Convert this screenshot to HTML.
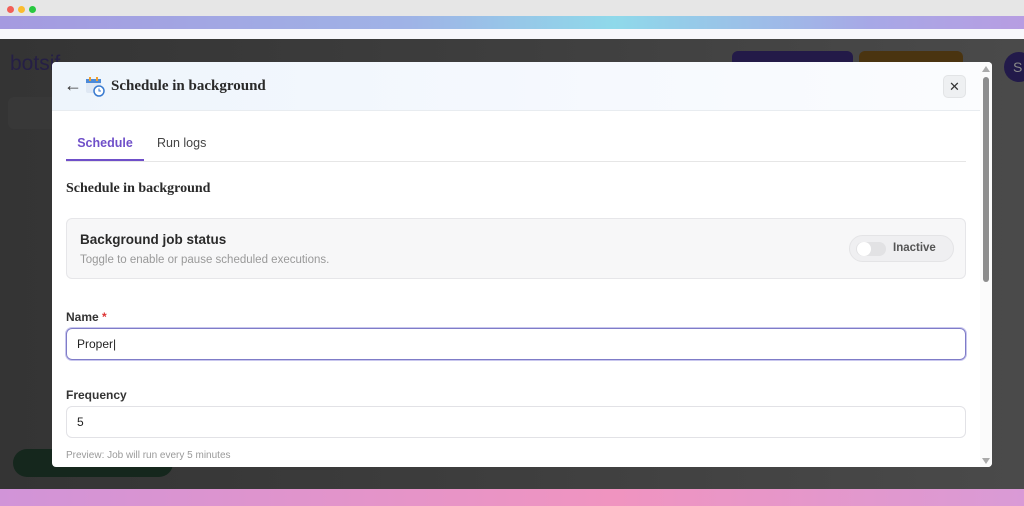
<!DOCTYPE html><html><head><style>
*{box-sizing:border-box;margin:0;padding:0}
body{width:1024px;height:506px;overflow:hidden;font-family:"Liberation Sans",sans-serif;background:#3c3c3c;position:relative}
.top{position:absolute;left:0;top:0;width:1024px;height:16px;background:#e6e6e6}
.dot{position:absolute;top:6px;width:7px;height:7px;border-radius:50%}
.grad{position:absolute;left:0;top:16px;width:1024px;height:13px;background:linear-gradient(90deg,#a59ae0,#9fb3e6 40%,#8fd9ea 60%,#a7a8e6 85%,#b79de2)}
.wstrip{position:absolute;left:0;top:29px;width:1024px;height:10px;background:#f7f7fb}
.bot{position:absolute;left:0;top:489px;width:1024px;height:17px;background:linear-gradient(90deg,#d194d8,#f094c0 60%,#d99ad6)}
.bg{position:absolute;left:0;top:39px;width:1024px;height:450px;background:linear-gradient(90deg,#343434,#3e3e3e 50%,#4a4a4a)}
.modal{position:absolute;left:52px;top:62px;width:940px;height:405px;background:#fff;border-radius:4px;overflow:hidden}
.hdr{height:49px;background:linear-gradient(90deg,#eef5fc,#f6f9fe 60%,#fbfcfe);border-bottom:1px solid #e8ecf0;position:relative}
.ttl{position:absolute;left:59px;top:15px;font-family:"Liberation Serif",serif;font-weight:bold;font-size:15px;color:#2a2a2a}
.x{position:absolute;left:891px;top:13px;width:23px;height:23px;border-radius:5px;background:#eef0f2;border:1px solid #e2e4e6;text-align:center;line-height:21px;font-size:13px;color:#333}
.sb{position:absolute;left:928px;top:0;width:12px;height:405px;background:#fbfbfb}
.thumb{position:absolute;left:931px;top:15px;width:6px;height:205px;background:#8d8d8d;border-radius:3px}
.tabs{position:absolute;left:14px;top:63px;width:900px;height:37px;border-bottom:1px solid #e6e6e6;font-size:12.5px}
.t1{position:absolute;left:0;top:11px;width:78px;text-align:center;color:#6f4fc9;font-weight:bold}
.ul{position:absolute;left:0;top:34px;width:78px;height:2px;background:#6f4fc9}
.t2{position:absolute;left:91px;top:11px;color:#444}
.h2{position:absolute;left:14px;top:118px;font-family:"Liberation Serif",serif;font-weight:bold;font-size:14px;color:#2a2a2a}
.card{position:absolute;left:14px;top:156px;width:900px;height:61px;border:1px solid #e6e6e9;border-radius:6px;background:#f7f7f8}
.ct{position:absolute;left:13px;top:13px;font-size:13.5px;font-weight:bold;color:#2a2a2a}
.cs{position:absolute;left:13px;top:35px;font-size:11.5px;color:#999}
.pill{position:absolute;left:782px;top:16px;width:105px;height:27px;border-radius:14px;background:#efeff1;border:1px solid #e4e4e6}
.sw{position:absolute;left:6px;top:6px;width:30px;height:14px;border-radius:7px;background:#e2e2e4}
.knob{position:absolute;left:7px;top:6px;width:14px;height:14px;border-radius:50%;background:#fff}
.pl{position:absolute;left:43px;top:6px;font-size:11.5px;font-weight:bold;color:#555}
.lbl{position:absolute;left:14px;font-size:12px;font-weight:bold;color:#333}
.inp{position:absolute;left:14px;width:900px;height:32px;border:1px solid #e2e2e6;border-radius:6px;font-size:12px;color:#222;padding:8px 10px}
.prev{position:absolute;left:14px;top:388px;font-size:10px;color:#999}
</style></head><body>
<div class="top"><div class="dot" style="left:7px;background:#f25f57"></div><div class="dot" style="left:18px;background:#fbbc2e"></div><div class="dot" style="left:29px;background:#28c840"></div></div>
<div class="grad"></div><div class="wstrip"></div>
<div class="bg">
<div style="position:absolute;left:10px;top:13px;font-size:21px;color:#251f45">botsif</div>
<div style="position:absolute;left:732px;top:12px;width:121px;height:30px;border-radius:6px;background:#231a48"></div>
<div style="position:absolute;left:859px;top:12px;width:104px;height:30px;border-radius:6px;background:#4a3410"></div>
<div style="position:absolute;left:1004px;top:13px;width:30px;height:30px;border-radius:50%;background:#221a4a;color:#888;font-size:14px;line-height:30px;padding-left:9px">S</div>
<div style="position:absolute;left:8px;top:58px;width:50px;height:32px;background:#383838;border-radius:6px"></div>
<div style="position:absolute;left:13px;top:410px;width:160px;height:28px;border-radius:14px;background:#15271d"></div>
</div>
<div class="bot"></div>
<div class="modal">
<div class="hdr">
<div style="position:absolute;left:12px;top:13px;font-size:18px;color:#333">&#8592;</div>
<svg style="position:absolute;left:33px;top:14px" width="20" height="21" viewBox="0 0 20 21"><rect x="1" y="3" width="15" height="14" rx="2" fill="#dfe8f4"/><rect x="1" y="3" width="15" height="4" fill="#4c8ad8"/><rect x="4" y="1" width="2" height="4" fill="#f0a030"/><rect x="11" y="1" width="2" height="4" fill="#f0a030"/><circle cx="14" cy="15" r="5" fill="#fff" stroke="#3a7bd0" stroke-width="1.5"/><path d="M14 12.5V15h2" stroke="#3a7bd0" fill="none"/></svg>
<div class="ttl" style="top:16px">Schedule in background</div>
<div class="x">&#10005;</div>
</div>
<div class="tabs"><div class="t1">Schedule</div><div class="ul"></div><div class="t2">Run logs</div></div>
<div class="h2" style="top:119px">Schedule in background</div>
<div class="card"><div class="ct">Background job status</div><div class="cs">Toggle to enable or pause scheduled executions.</div>
<div class="pill"><div class="sw"></div><div class="knob"></div><div class="pl">Inactive</div></div></div>
<div class="lbl" style="top:248px">Name <span style="color:#d33">*</span></div>
<div class="inp" style="top:266px;border-color:#7f7cc8;box-shadow:0 0 0 1px #c9c7ee">Proper|</div>
<div class="lbl" style="top:326px">Frequency</div>
<div class="inp" style="top:344px">5</div>
<div class="prev">Preview: Job will run every 5 minutes</div>
<div class="sb"></div><div class="thumb"></div>
<div style="position:absolute;left:930px;top:4px;border:4px solid transparent;border-bottom:6px solid #aaa;border-top:0"></div>
<div style="position:absolute;left:930px;top:396px;border:4px solid transparent;border-top:6px solid #aaa;border-bottom:0"></div>
</div>
</body></html>
